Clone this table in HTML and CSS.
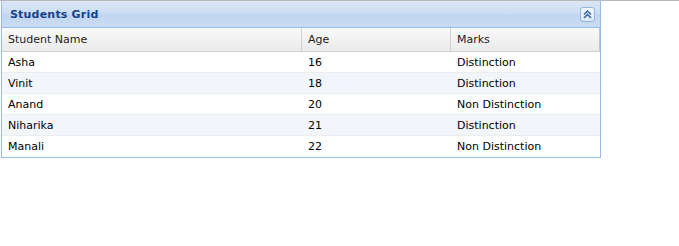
FILE: index.html
```html
<!DOCTYPE html>
<html>
<head>
<title>Students Grid</title>
<link rel="stylesheet" href="styles.css">
</head>
<body>
<div class="topline"></div>
<div class="grid_panel">
	<div class="grid_header">
		<span class="grid_title">Students Grid</span>
		<button class="collapse_tool" title="Collapse panel">
			<svg width="9" height="9" viewBox="0 0 9 9">
				<path d="M1 4.5 L4.5 1 L8 4.5 M1 8 L4.5 4.5 L8 8" fill="none" stroke="#3f6ba8" stroke-width="1.6"/>
			</svg>
		</button>
	</div>
	<div class="col_header">
		<div class="cell col_name">Student Name</div>
		<div class="cell col_age">Age</div>
		<div class="cell col_marks">Marks</div>
	</div>
	<div class="grid_body">
		<div class="row">
			<div class="cell col_name">Asha</div>
			<div class="cell col_age">16</div>
			<div class="cell col_marks">Distinction</div>
		</div>
		<div class="row alt">
			<div class="cell col_name">Vinit</div>
			<div class="cell col_age">18</div>
			<div class="cell col_marks">Distinction</div>
		</div>
		<div class="row">
			<div class="cell col_name">Anand</div>
			<div class="cell col_age">20</div>
			<div class="cell col_marks">Non Distinction</div>
		</div>
		<div class="row alt">
			<div class="cell col_name">Niharika</div>
			<div class="cell col_age">21</div>
			<div class="cell col_marks">Distinction</div>
		</div>
		<div class="row">
			<div class="cell col_name">Manali</div>
			<div class="cell col_age">22</div>
			<div class="cell col_marks">Non Distinction</div>
		</div>
	</div>
</div>
</body>
</html>
```

FILE: styles.css
```css
body
{
	margin : 0;
	font-family : "DejaVu Sans", Tahoma, sans-serif;
	font-size : 11px;
	background-color : white;
}
.topline
{
	height : 1px;
	background-color : #b8b8b8;
}
.grid_panel
{
	width : 598px;
	margin-left : 1px;
	border : 1px solid #99bbe8;
	border-top-width : 0px;
}
.grid_header
{
	display : flex;
	align-items : center;
	justify-content : space-between;
	height : 26px;
	padding : 0 5px 0 8px;
	background : linear-gradient(#dae6f4, #cddef3 45%, #c0d5f0 55%, #c9dcf3);
	border-bottom : 1px solid #99bbe8;
}
.grid_title
{
	color : #15428b;
	font-weight : bold;
	font-size : 11px;
	letter-spacing : 0.2px;
	padding-top : 1px;
}
.collapse_tool
{
	display : flex;
	align-items : center;
	justify-content : center;
	width : 15px;
	height : 15px;
	padding : 0;
	border : 1px solid #98b5dc;
	border-radius : 3px;
	background : linear-gradient(#f4f8fd, #dbe7f6);
}
.col_header
{
	display : flex;
	height : 23px;
	background : linear-gradient(#f9f9f9, #ebebeb);
	border-bottom : 1px solid #d0d0d0;
	color : #222;
}
.col_header .cell
{
	border-right : 1px solid #d0d0d0;
	padding-bottom : 1px;
}
.col_header .cell:last-child
{
	border-right-color : #c5c5c5;
}
.cell
{
	display : flex;
	align-items : center;
	padding-left : 6px;
	box-sizing : border-box;
	white-space : nowrap;
}
.col_name
{
	width : 300px;
}
.col_age
{
	width : 149px;
}
.col_marks
{
	width : 149px;
}
.row
{
	display : flex;
	height : 20px;
	border-bottom : 1px solid #ededed;
	color : #000;
	background-color : white;
}
.row.alt
{
	background-color : #f2f6fb;
}
.row:last-child
{
	border-bottom-color : white;
}
```
